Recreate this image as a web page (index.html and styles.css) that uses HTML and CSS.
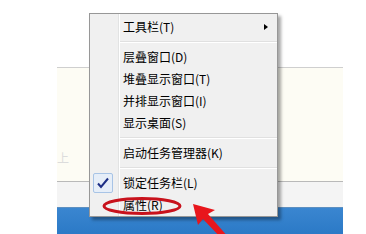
FILE: index.html
```html
<!DOCTYPE html>
<html>
<head>
<meta charset="utf-8">
<link rel="stylesheet" href="styles.css">
</head>
<body>
<div class="desk">
  <div class="panel"><span class="faint">上</span></div>
  <div class="strip"></div>
  <div class="taskbar"></div>
</div>

<div class="menu">
  <div class="item"><span class="label">工具栏(T)</span><span class="sub"></span></div>
  <div class="sep"></div>
  <div class="item"><span class="label">层叠窗口(D)</span></div>
  <div class="item"><span class="label">堆叠显示窗口(T)</span></div>
  <div class="item"><span class="label">并排显示窗口(I)</span></div>
  <div class="item"><span class="label">显示桌面(S)</span></div>
  <div class="sep"></div>
  <div class="item"><span class="label">启动任务管理器(K)</span></div>
  <div class="sep"></div>
  <div class="item"><span class="check"><svg width="14" height="12" viewBox="0 0 14 12"><path d="M2 6.5 L5 10 L12 1.5" fill="none" stroke="#1d2f86" stroke-width="2"/></svg></span><span class="label">锁定任务栏(L)</span></div>
  <div class="item"><span class="label">属性(R)</span></div>
</div>

<svg class="ellipse" width="84" height="20" viewBox="0 0 84 20"><ellipse cx="42" cy="10" rx="38" ry="7.5" fill="none" stroke="#c8121c" stroke-width="3"/></svg>
<svg class="arrow" width="50" height="34" viewBox="0 0 50 34"><polygon points="0,0 22,6 15,10 36,34 28,34 10,15 5,21" fill="#e8161c"/></svg>
</body>
</html>
```
FILE: styles.css
```css
html, body {
  margin: 0;
  padding: 0;
  background: #ffffff;
  width: 366px;
  height: 234px;
  overflow: hidden;
  font-family: "Noto Sans CJK SC", "Noto Sans", sans-serif;
}
.desk {
  padding-top: 67px;
  margin-left: 57px;
  width: 286px;
}
.panel {
  height: 113px;
  background: #fdfcf4;
  border-top: 1px solid #cfcfcf;
  border-bottom: 1px solid #b9b9b9;
  display: flex;
  align-items: flex-start;
}
.faint {
  margin-top: 83px;
  font-size: 12px;
  color: #dcdcdc;
  line-height: 14px;
}
.strip {
  height: 25px;
  background: #f4f4f4;
  border-bottom: 1px solid #5d8fc0;
}
.taskbar {
  height: 27px;
  background: linear-gradient(#3a86d0, #2b79c6);
}
.menu {
  position: absolute;
  left: 89px;
  top: 13px;
  width: 187px;
  padding: 2px 0 0 0;
  background: #f0f0f0;
  border: 1px solid #979797;
  box-shadow: 3px 3px 3px rgba(0,0,0,0.35);
  background-image: linear-gradient(to right, transparent 28px, #e2e3e3 28px, #e2e3e3 29px, #ffffff 29px, #ffffff 30px, transparent 30px);
}
.item {
  height: 22px;
  display: flex;
  align-items: center;
  position: relative;
  font-size: 12px;
  color: #000;
  padding-left: 33px;
}
.label {
  line-height: 22px;
}
.sub {
  position: absolute;
  left: 174px;
  top: 8px;
  width: 0;
  height: 0;
  border-top: 3.5px solid transparent;
  border-bottom: 3.5px solid transparent;
  border-left: 4px solid #000;
}
.sep {
  height: 8px;
  margin-left: 30px;
  background: linear-gradient(transparent 3px, #e0e0e0 3px, #e0e0e0 4px, #ffffff 4px, #ffffff 5px, transparent 5px);
}
.check {
  position: absolute;
  left: 3px;
  top: 1px;
  width: 18px;
  height: 18px;
  border: 1px solid #a8c4e6;
  border-radius: 2px;
  background: #e6eef8;
  display: flex;
  align-items: center;
  justify-content: center;
}
.ellipse {
  position: absolute;
  left: 100px;
  top: 196px;
}
.arrow {
  position: absolute;
  left: 193px;
  top: 204px;
}
```
